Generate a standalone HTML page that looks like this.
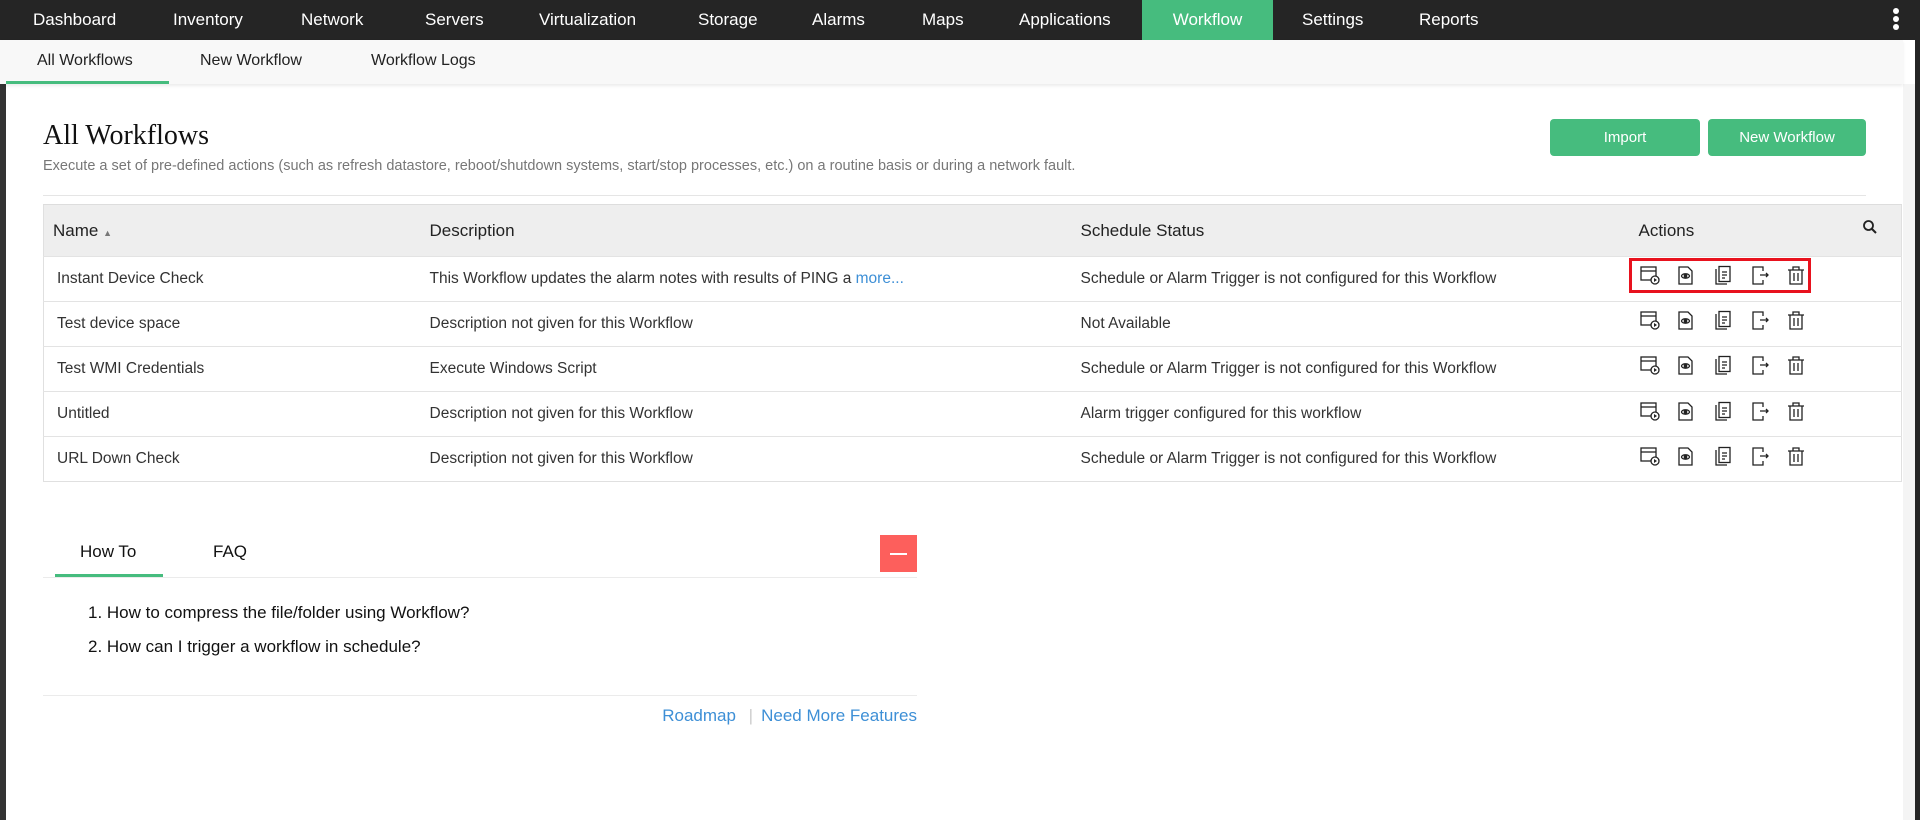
<!DOCTYPE html>
<html><head><meta charset="utf-8"><style>
*{margin:0;padding:0;box-sizing:border-box}
body{width:1920px;height:820px;background:#fff;font-family:"Liberation Sans",sans-serif;position:relative;overflow:hidden;color:#222}
.abs{position:absolute}
#top{left:0;top:0;width:1920px;height:40px;background:#252525}
#top span{position:absolute;top:0;line-height:40px;color:#fff;font-size:17px}
#wf{background:#46bc7e;height:40px}
#sub{left:0;top:40px;width:1903px;height:44px;background:#f8f8f8;box-shadow:0 2px 3px rgba(0,0,0,.08)}
#sub span{position:absolute;top:0;line-height:42px;font-size:16px;color:#222}
.btn{position:absolute;top:119px;height:37px;background:#46bc7e;color:#fff;border-radius:4px;font-size:15px;text-align:center;line-height:37px}
table{position:absolute;left:43px;top:204px;width:1859px;border-collapse:collapse;font-size:15.5px}
th{background:#eeeeee;height:52px;text-align:left;font-weight:normal;font-size:17px;color:#222;border-top:1px solid #ddd}
td{height:45px;border-top:1px solid #e3e3e3;color:#333}
table{border:1px solid #e0e0e0}
.ic{position:absolute;width:20px;height:22px}
</style></head><body>
<div class="abs" style="left:0;top:0;width:6px;height:820px;background:#333"></div>
<div class="abs" style="left:1903px;top:84px;width:12px;height:736px;background:#f4f4f4"></div>
<div class="abs" style="left:1915px;top:0;width:5px;height:820px;background:#252525"></div>
<div id="top" class="abs">
<span style="left:33px">Dashboard</span><span style="left:173px">Inventory</span><span style="left:301px">Network</span><span style="left:425px">Servers</span><span style="left:539px">Virtualization</span><span style="left:698px">Storage</span><span style="left:812px">Alarms</span><span style="left:922px">Maps</span><span style="left:1019px">Applications</span>
<span id="wf" style="left:1142px;width:131px;text-align:center">Workflow</span>
<span style="left:1302px">Settings</span><span style="left:1419px">Reports</span>
<div class="abs" style="left:1893px;top:8px;width:6px;height:6px;border-radius:3px;background:#fff"></div>
<div class="abs" style="left:1893px;top:16px;width:6px;height:6px;border-radius:3px;background:#fff"></div>
<div class="abs" style="left:1893px;top:24px;width:6px;height:6px;border-radius:3px;background:#fff"></div>
</div>
<div id="sub" class="abs">
<span style="left:37px">All Workflows</span><span style="left:200px">New Workflow</span><span style="left:371px">Workflow Logs</span>
<div class="abs" style="left:6px;top:41px;width:163px;height:3px;background:#46bc7e"></div>
</div>
<div class="abs" style="left:43px;top:120px;font-family:'Liberation Serif',serif;font-size:28px;color:#111">All Workflows</div>
<div class="abs" style="left:43px;top:158px;font-size:14.5px;color:#777">Execute a set of pre-defined actions (such as refresh datastore, reboot/shutdown systems, start/stop processes, etc.) on a routine basis or during a network fault.</div>
<div class="btn" style="left:1550px;width:150px">Import</div>
<div class="btn" style="left:1708px;width:158px">New Workflow</div>
<div class="abs" style="left:43px;top:195px;width:1823px;height:1px;background:#e5e5e5"></div>
<table>
<tr><th style="width:386px;padding-left:9px">Name <span style="font-size:9px;color:#777">&#9650;</span></th><th style="width:651px">Description</th><th style="width:558px">Schedule Status</th><th>Actions</th></tr>
<tr><td style="padding-left:13px">Instant Device Check</td><td>This Workflow updates the alarm notes with results of PING a <span style="color:#3d8fd6">more...</span></td><td>Schedule or Alarm Trigger is not configured for this Workflow</td><td></td></tr>
<tr><td style="padding-left:13px">Test device space</td><td>Description not given for this Workflow</td><td>Not Available</td><td></td></tr>
<tr><td style="padding-left:13px">Test WMI Credentials</td><td>Execute Windows Script</td><td>Schedule or Alarm Trigger is not configured for this Workflow</td><td></td></tr>
<tr><td style="padding-left:13px">Untitled</td><td>Description not given for this Workflow</td><td>Alarm trigger configured for this workflow</td><td></td></tr>
<tr><td style="padding-left:13px">URL Down Check</td><td>Description not given for this Workflow</td><td>Schedule or Alarm Trigger is not configured for this Workflow</td><td></td></tr>
</table>
<svg class="abs" style="left:1862px;top:219px" width="16" height="16" viewBox="0 0 16 16"><circle cx="6.5" cy="6.5" r="4.5" fill="none" stroke="#222" stroke-width="1.8"/><path d="M10 10l4 4" stroke="#222" stroke-width="2"/></svg>
<div class="abs" style="left:1629px;top:258px;width:182px;height:35px;border:3px solid #e8121e"></div>
<svg width="0" height="0" style="position:absolute"><defs>
<g id="i1" fill="none" stroke="#222" stroke-width="1.3"><rect x="1" y="2" width="15" height="13"/><path d="M1 6h15"/><circle cx="15" cy="15" r="4" fill="#fff"/><path d="M14 13v4l3-2z" fill="#222" stroke="none"/></g>
<g id="i2" fill="none" stroke="#222" stroke-width="1.3"><path d="M3 2h9l4 4v13H3z"/><ellipse cx="9.5" cy="11" rx="4" ry="2.2"/><circle cx="9.5" cy="11" r="1.2" fill="#222"/></g>
<g id="i3" fill="none" stroke="#222" stroke-width="1.3"><path d="M3 4v15h11"/><rect x="6" y="1.5" width="11" height="15"/><path d="M9 7h5M9 10h5M9 13h3"/></g>
<g id="i4" fill="none" stroke="#222" stroke-width="1.3"><path d="M13 6V2H3v17h10v-4"/><path d="M10 10h8M16 8l2 2-2 2"/></g>
<g id="i5" fill="none" stroke="#222" stroke-width="1.3"><path d="M2 5h16M7 5V2h6v3M4 5v14h12V5M8 8v8M12 8v8"/></g>
</defs></svg>
<div id="icons"></div>
<script>
var ys=[265,310,355,401,446],xs=[1640,1676,1713,1750,1786],h='';
ys.forEach(function(y){xs.forEach(function(x,i){h+='<svg class="ic" style="left:'+x+'px;top:'+y+'px" viewBox="0 0 20 22" width="20" height="22"><use href="#i'+(i+1)+'"/></svg>';});});
document.getElementById('icons').innerHTML=h;
</script>
<div class="abs" style="left:80px;top:542px;font-size:17px;color:#111">How To</div>
<div class="abs" style="left:213px;top:542px;font-size:17px;color:#111">FAQ</div>
<div class="abs" style="left:55px;top:574px;width:108px;height:3px;background:#46bc7e"></div>
<div class="abs" style="left:43px;top:577px;width:874px;height:1px;background:#ebebeb"></div>
<div class="abs" style="left:880px;top:535px;width:37px;height:37px;background:#fd5f5c"><div class="abs" style="left:10px;top:18px;width:17px;height:1.5px;background:#fff"></div></div>
<div class="abs" style="left:88px;top:603px;font-size:17px;color:#111">1. How to compress the file/folder using Workflow?</div>
<div class="abs" style="left:88px;top:637px;font-size:17px;color:#111">2. How can I trigger a workflow in schedule?</div>
<div class="abs" style="left:43px;top:695px;width:874px;height:1px;background:#ebebeb"></div>
<div class="abs" style="left:600px;top:706px;width:317px;text-align:right;font-size:17px;color:#3d8fd6">Roadmap <span style="color:#ccc;margin:0 8px">|</span>Need More Features</div>
</body></html>
